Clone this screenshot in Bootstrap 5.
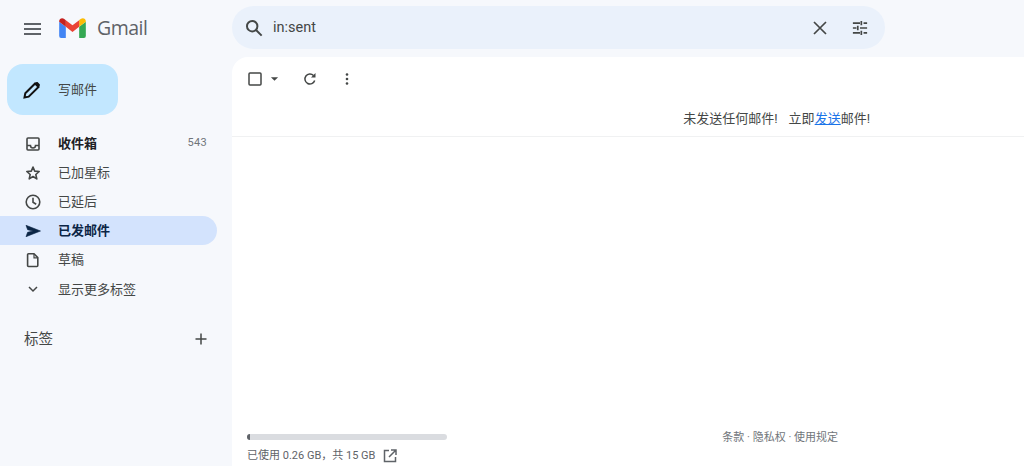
<!DOCTYPE html>
<html lang="zh-CN">
<head>
<meta charset="utf-8">
<title>Gmail</title>
<link rel="stylesheet" href="https://cdn.jsdelivr.net/npm/bootstrap@5.3.0/dist/css/bootstrap.min.css">
<style>
html,body{height:466px;overflow:hidden;}
body{background:#f6f8fc;font-family:Roboto,"Noto Sans CJK SC",sans-serif;color:#444746;font-size:13px;}
.shell{height:466px;}
.side{width:232px;height:466px;flex:none;}
.brand{height:57px;padding-left:24px;}
.brand-word{font-family:"Open Sans","Liberation Sans",sans-serif;font-size:19.5px;letter-spacing:-.5px;color:#5f6368;margin-left:11px;margin-bottom:2px;line-height:1;}
.logo-m{margin-left:17px;margin-bottom:2px;}
.compose-btn{width:111px;height:51px;margin:7px 0 0 7px;background:#c2e7ff;border-radius:16px;padding-left:16px;color:#444746;font-size:13px;border:0;gap:17px;}
.mail-list{margin-top:14px;width:217px;}
.mail-row{height:29px;padding:0 10px 0 24px;border-radius:0 15px 15px 0;color:#444746;font-size:13px;}
.mail-row svg{flex:none;width:18px;height:18px;margin-right:16px;}
.mail-row.hot{background:#d3e3fd;color:#0b2545;font-weight:700;}
.mail-row.strong{font-weight:700;color:#202124;}
.mail-row.more-row span{padding-top:2px;}
.mail-num{margin-left:auto;font-size:11px;font-weight:400;color:#70757a;letter-spacing:.3px;}
.tag-head{margin-top:22px;width:217px;padding:0 8px 0 24px;height:28px;font-size:14.5px;color:#444746;}
.tag-title{padding-top:2px;}
.main-col{min-width:0;}
.search-line{height:57px;padding-top:6px;}
.search-pill{width:653px;height:43px;background:#eaf1fb;border-radius:22px;padding:0 17px 0 13px;font-size:14.5px;color:#444746;}
.search-ic{margin-right:10px;}
.clear-ic{margin-right:25px;}
.panel{height:409px;background:#fff;border-radius:16px 0 0 0;}
.tools{height:43px;padding:0 0 0 16px;}
.tool-ic{margin-right:15px;}
.dots-ic{margin-left:27px;}
.notice{height:37px;padding:2px 154px 0 0;font-size:13px;color:#444746;border-bottom:1px solid #f0f1f2;white-space:pre;}
.notice a{color:#1a73e8;}
.notice-gap{width:11px;}
.foot{padding:0 186px 0 15px;height:32px;margin-top:auto;color:#70757a;font-size:11px;}
.quota{width:200px;height:6px;background:#dadce0;border-radius:3px;overflow:hidden;margin-bottom:8px;}
.quota-used{height:6px;background:#5f6368;}
.quota-text{font-size:11px;color:#5f6368;gap:8px;}
.terms{line-height:8px;font-size:11px;color:#70757a;}
</style>
</head>
<body>
<div class="shell d-flex">
  <aside class="side d-flex flex-column">
    <div class="brand d-flex align-items-center">
      <svg width="18" height="18" viewBox="0 0 18 18" aria-hidden="true"><path d="M0 4h17M0 9h17M0 14h17" stroke="#5f6368" stroke-width="1.800" fill="none"/></svg>
      <svg class="logo-m" width="27" height="20" viewBox="0 0 28 21" aria-hidden="true">
        <path d="M0 19V4l7 5.300V21H2a2 2 0 0 1-2-2z" fill="#4285f4"/>
        <path d="M21 21V9.300L28 4v15a2 2 0 0 1-2 2z" fill="#34a853"/>
        <path d="M21 9.300V2.200L23 .8C25 -.7 28 .7 28 3.400V4z" fill="#fbbc04"/>
        <path d="M7 9.300V2.300L14 7.600 21 2.300V9.300L14 14.600z" fill="#ea4335"/>
        <path d="M0 3.400C0 .7 3 -.7 5 .8L7 2.300V9.300L0 4z" fill="#c5221f"/>
      </svg>
      <span class="brand-word">Gmail</span>
    </div>
    <button type="button" class="compose-btn btn d-flex align-items-center">
      <svg width="18" height="18" viewBox="0 0 18 18" aria-hidden="true"><path d="M1.500 16.500l.8-4.200L12.100 2.500l3.400 3.400-9.800 9.800z" fill="none" stroke="#111" stroke-width="2"/><path d="M11.500 3l3.500 3.500L16.500 5c.6-.6.6-1.400 0-2l-1.500-1.500c-.6-.6-1.400-.6-2 0z" fill="#111"/></svg>
      <span>写邮件</span>
    </button>
    <nav class="mail-list d-flex flex-column">
      <div class="mail-row strong d-flex align-items-center">
        <svg viewBox="0 0 18 18" aria-hidden="true"><rect x="3" y="3" width="12" height="12" rx="1" fill="none" stroke="#444746" stroke-width="1.600"/><path d="M3 10.500H6.500a2.500 2.500 0 0 0 5 0H15" fill="none" stroke="#444746" stroke-width="1.500"/></svg>
        <span>收件箱</span><span class="mail-num">543</span>
      </div>
      <div class="mail-row d-flex align-items-center">
        <svg viewBox="0 0 18 18" aria-hidden="true"><path d="M9 3l1.700 4.100 4.500.4-3.400 3 1 4.400L9 12.500l-3.800 2.400 1-4.400-3.400-3 4.500-.4z" fill="none" stroke="#444746" stroke-width="1.600" stroke-linejoin="round"/></svg>
        <span>已加星标</span>
      </div>
      <div class="mail-row d-flex align-items-center">
        <svg viewBox="0 0 18 18" aria-hidden="true"><circle cx="9" cy="9" r="6.800" fill="none" stroke="#444746" stroke-width="1.600"/><path d="M9 4.800V9.300l3.200 2" fill="none" stroke="#444746" stroke-width="1.600"/></svg>
        <span>已延后</span>
      </div>
      <div class="mail-row hot d-flex align-items-center">
        <svg viewBox="0 0 18 18" aria-hidden="true"><path d="M2 3.300L16.500 9 2 14.700l1.600-4.400L9 9 3.600 7.700z" fill="#0b2545" stroke="#0b2545" stroke-width=".6"/></svg>
        <span>已发邮件</span>
      </div>
      <div class="mail-row d-flex align-items-center">
        <svg viewBox="0 0 18 18" aria-hidden="true"><path d="M4.500 2.800h5.500l3.800 3.800v8a.9.9 0 0 1-.9.900H4.500a.9.9 0 0 1-.9-.9V3.700a.9.9 0 0 1 .9-.9z" fill="none" stroke="#444746" stroke-width="1.600" stroke-linejoin="round"/><path d="M10 2.800v4h3.800" fill="none" stroke="#444746" stroke-width="1.200"/></svg>
        <span>草稿</span>
      </div>
      <div class="mail-row more-row d-flex align-items-center">
        <svg viewBox="0 0 18 18" aria-hidden="true"><path d="M5 7l4 4 4-4" fill="none" stroke="#444746" stroke-width="1.500"/></svg>
        <span>显示更多标签</span>
      </div>
    </nav>
    <div class="tag-head d-flex align-items-center justify-content-between">
      <span class="tag-title">标签</span>
      <svg width="16" height="16" viewBox="0 0 16 16" aria-hidden="true"><path d="M8 2.500v11M2.500 8h11" stroke="#444746" stroke-width="1.500" fill="none"/></svg>
    </div>
  </aside>
  <main class="main-col flex-grow-1 d-flex flex-column">
    <div class="search-line">
      <div class="search-pill d-flex align-items-center">
        <svg class="search-ic" width="18" height="18" viewBox="0 0 20 20" aria-hidden="true"><circle cx="8" cy="8" r="5.800" fill="none" stroke="#444746" stroke-width="2.200"/><path d="M12 12l6.500 6.500" stroke="#444746" stroke-width="2.200" fill="none"/></svg>
        <span class="flex-grow-1">in:sent</span>
        <svg class="clear-ic" width="14" height="14" viewBox="0 0 14 14" aria-hidden="true"><path d="M1 1l12 12M13 1L1 13" stroke="#444746" stroke-width="1.700" fill="none"/></svg>
        <svg width="16" height="16" viewBox="0 0 18 18" aria-hidden="true"><path d="M1 3.500h8M13 3.500h4M1 9h4M9 9h8M1 14.500h8M13 14.500h4" stroke="#444746" stroke-width="1.900" fill="none"/><path d="M10.500 1v5M6.500 6.500v5M10.500 12v5" stroke="#444746" stroke-width="1.900" fill="none"/></svg>
      </div>
    </div>
    <section class="panel d-flex flex-column">
      <div class="tools d-flex align-items-center">
        <svg width="14" height="14" viewBox="0 0 14 14" aria-hidden="true"><rect x="1" y="1" width="12" height="12" rx="1" fill="none" stroke="#444746" stroke-width="1.500"/></svg>
        <svg class="ms-2 tool-ic" width="9" height="6" viewBox="0 0 10 6" aria-hidden="true"><path d="M1 1h8L5 5z" fill="#444746"/></svg>
        <svg class="ms-2" width="16" height="16" viewBox="0 0 16 16" aria-hidden="true"><path d="M12.700 9.500A5 5 0 1 1 11.500 4.500" fill="none" stroke="#444746" stroke-width="1.500"/><path d="M13.500 2v4.500H9z" fill="#444746"/></svg>
        <svg class="dots-ic" width="4" height="14" viewBox="0 0 4 14" aria-hidden="true"><circle cx="2" cy="2.500" r="1.300" fill="#444746"/><circle cx="2" cy="7" r="1.300" fill="#444746"/><circle cx="2" cy="11.500" r="1.300" fill="#444746"/></svg>
      </div>
      <div class="notice d-flex align-items-center justify-content-end"><span>未发送任何邮件!</span><span class="notice-gap"></span><span>立即<a href="#">发送</a>邮件!</span></div>
      <footer class="foot d-flex justify-content-between">
        <div>
          <div class="quota"><div class="quota-used" style="width:1.300%"></div></div>
          <div class="quota-text d-flex align-items-center">
            <span>已使用 0.26 GB，共 15 GB</span>
            <svg width="14" height="14" viewBox="0 0 14 14" aria-hidden="true"><path d="M6 1.500H1.500v11h11V8" fill="none" stroke="#5f6368" stroke-width="1.500"/><path d="M8 1h5v5M13 1L6 8" fill="none" stroke="#5f6368" stroke-width="1.500"/></svg>
          </div>
        </div>
        <div class="terms">条款 · 隐私权 · 使用规定</div>
      </footer>
    </section>
  </main>
</div>
<script src="https://cdn.jsdelivr.net/npm/bootstrap@5.3.0/dist/js/bootstrap.bundle.min.js"></script>
</body>
</html>
